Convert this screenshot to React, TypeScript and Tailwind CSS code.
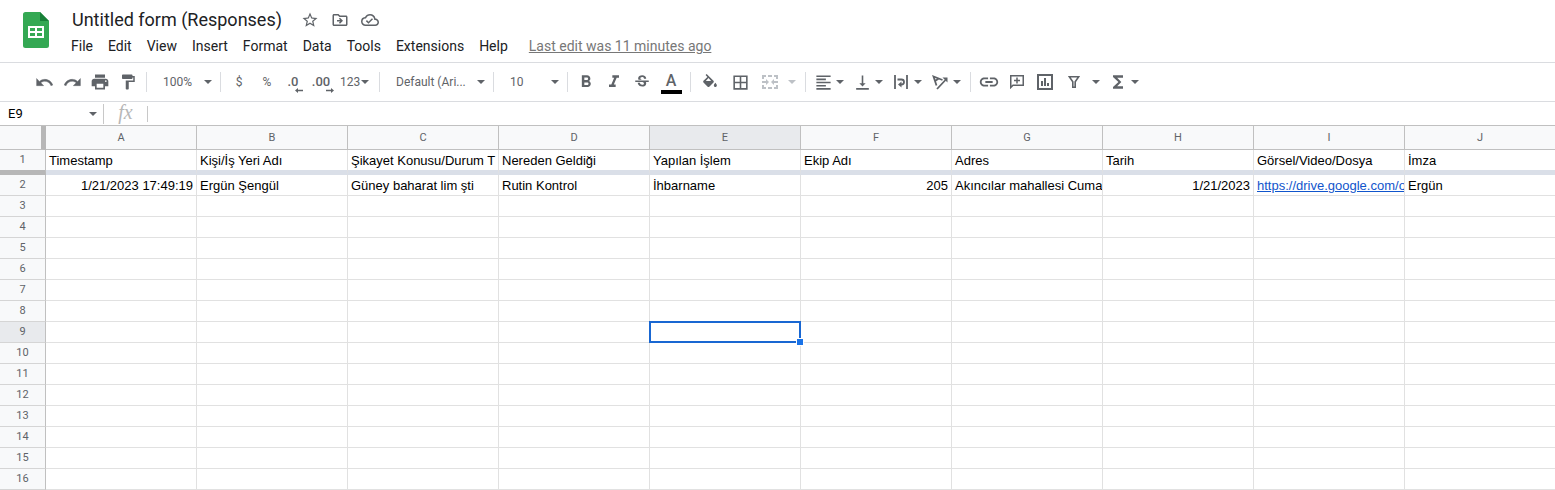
import type { ReactNode } from 'react';
import {
  MdBorderAll,
  MdFormatAlignLeft,
  MdFormatBold,
  MdFormatItalic,
  MdFormatPaint,
  MdFunctions,
  MdLink,
  MdOutlineCloudDone,
  MdOutlineDriveFileMove,
  MdPrint,
  MdStarBorder,
  MdStrikethroughS,
  MdVerticalAlignBottom,
} from 'react-icons/md';

const menus = ['File', 'Edit', 'View', 'Insert', 'Format', 'Data', 'Tools', 'Extensions', 'Help'];
const columns = ['A', 'B', 'C', 'D', 'E', 'F', 'G', 'H', 'I', 'J'];
const rowNumbers = Array.from({ length: 16 }, (_, i) => i + 1);

const cells: Record<string, string> = {
  A1: 'Timestamp',
  B1: 'Kişi/İş Yeri Adı',
  C1: 'Şikayet Konusu/Durum T',
  D1: 'Nereden Geldiği',
  E1: 'Yapılan İşlem',
  F1: 'Ekip Adı',
  G1: 'Adres',
  H1: 'Tarih',
  I1: 'Görsel/Video/Dosya',
  J1: 'İmza',
  A2: '1/21/2023 17:49:19',
  B2: 'Ergün Şengül',
  C2: 'Güney baharat lim şti',
  D2: 'Rutin Kontrol',
  E2: 'İhbarname',
  F2: '205',
  G2: 'Akıncılar mahallesi Cuma',
  H2: '1/21/2023',
  I2: 'https://drive.google.com/o',
  J2: 'Ergün',
};
const rightAligned = ['A2', 'F2', 'H2'];

const undoPath =
  'M12.500 8c-2.650 0-5.050.990-6.900 2.600L2 7v9h9l-3.620-3.620c1.390-1.160 3.160-1.880 5.120-1.880 3.540 0 6.550 2.310 7.600 5.500l2.370-.780C21.080 11.030 17.150 8 12.500 8z';

function UndoIcon({ flipped }: { flipped?: boolean }) {
  return (
    <svg
      viewBox="0 0 24 24"
      className="size-[19px] fill-current stroke-current"
      strokeWidth=".5"
      aria-hidden="true"
    >
      <path d={undoPath} transform={flipped ? 'translate(24 0) scale(-1 1)' : undefined} />
    </svg>
  );
}

function Caret() {
  return (
    <svg viewBox="0 0 8 4" className="h-1 w-2 shrink-0 fill-current" aria-hidden="true">
      <path d="M0 0h8L4 4z" />
    </svg>
  );
}

function Sep() {
  return <div className="mx-1 h-5 w-px shrink-0 bg-[#dadce0]" />;
}

function Tool({ label, wide, children }: { label: string; wide?: boolean; children: ReactNode }) {
  return (
    <button
      type="button"
      aria-label={label}
      className={`flex h-7 shrink-0 items-center justify-center ${wide ? 'w-[30px]' : 'w-7'}`}
    >
      {children}
    </button>
  );
}

function Combo({ label, children }: { label: string; children: ReactNode }) {
  return (
    <button type="button" aria-label={label} className="flex h-7 w-[39px] shrink-0 items-center">
      <span className="flex w-[26px] justify-center">{children}</span>
      <Caret />
    </button>
  );
}

function Picker({ label, value, className }: { label: string; value: string; className: string }) {
  return (
    <label className={`grid h-7 shrink-0 items-center ${className}`}>
      <select
        aria-label={label}
        className="col-start-1 row-start-1 w-full appearance-none bg-transparent pl-3 text-xs outline-none"
      >
        <option>{value}</option>
      </select>
      <span className="pointer-events-none col-start-1 row-start-1 mr-1 justify-self-end">
        <Caret />
      </span>
    </label>
  );
}

function DecimalIcon({ text, more }: { text: string; more?: boolean }) {
  return (
    <span className="flex flex-col items-end pt-1">
      <span className="pr-1 text-[13px] leading-[13px] font-medium">{text}</span>
      <svg viewBox="0 0 8 5" className="h-[5px] w-2 fill-current" aria-hidden="true">
        {more ? <path d="M0 1.700h5V0l3 2.500L5 5V3.300H0z" /> : <path d="M8 1.700H3V0L0 2.500 3 5V3.300h5z" />}
      </svg>
    </span>
  );
}

function SheetsLogo() {
  return (
    <svg viewBox="0 0 26 36" className="h-9 w-[26px]" aria-hidden="true">
      <path fill="#34a853" d="M2.500 0H17l9 9v24.500a2.500 2.500 0 0 1-2.500 2.500h-21A2.500 2.500 0 0 1 0 33.500v-31A2.500 2.500 0 0 1 2.500 0z" />
      <path fill="#188038" d="M17 0l9 9h-9z" />
      <path
        fill="#fff"
        fillRule="evenodd"
        d="M5 14h16v12H5zM7 16v3h5v-3zM14 16v3h5v-3zM7 21v3h5v-3zM14 21v3h5v-3z"
      />
    </svg>
  );
}

function Header() {
  return (
    <header className="flex h-[62px] pl-[23px]">
      <div className="pt-3">
        <SheetsLogo />
      </div>
      <div className="min-w-0 pt-2 pl-[22px]">
        <div className="flex h-6 items-center">
          <h1 className="pl-px text-lg leading-6 whitespace-nowrap text-[#202124]">Untitled form (Responses)</h1>
          <div className="flex gap-3 pl-[19px] text-[#5f6368]">
            <button type="button" aria-label="Star">
              <MdStarBorder size={18} />
            </button>
            <button type="button" aria-label="Move">
              <MdOutlineDriveFileMove size={18} />
            </button>
            <button type="button" aria-label="See document status">
              <MdOutlineCloudDone size={18} />
            </button>
          </div>
        </div>
        <nav className="flex h-7 items-center gap-[15px] text-sm whitespace-nowrap text-[#202124]">
          {menus.map((m) => (
            <button type="button" key={m}>
              {m}
            </button>
          ))}
          <a href="#history" className="pl-1.5 text-[#777] underline">
            Last edit was 11 minutes ago
          </a>
        </nav>
      </div>
    </header>
  );
}

function Toolbar() {
  return (
    <div
      role="toolbar"
      aria-label="Formatting"
      className="flex h-10 items-center overflow-hidden border-y border-[#dadce0] pl-[30px] text-xs text-[#5f6368]"
    >
      <Tool label="Undo">
        <UndoIcon />
      </Tool>
      <Tool label="Redo">
        <UndoIcon flipped />
      </Tool>
      <Tool label="Print">
        <MdPrint size={20} />
      </Tool>
      <Tool label="Paint format">
        <MdFormatPaint size={18} />
      </Tool>
      <Sep />
      <Picker label="Zoom" value="100%" className="w-[65px]" />
      <Sep />
      <Tool label="Format as currency">$</Tool>
      <Tool label="Format as percent">%</Tool>
      <Tool label="Decrease decimal places">
        <DecimalIcon text=".0" />
      </Tool>
      <Tool label="Increase decimal places">
        <DecimalIcon text=".00" more />
      </Tool>
      <button type="button" aria-label="More formats" className="flex h-7 w-[38px] shrink-0 items-center pl-[3px]">
        <span className="pr-px">123</span>
        <Caret />
      </button>
      <Sep />
      <Picker label="Font" value="Default (Ari..." className="w-[105px]" />
      <Sep />
      <Picker label="Font size" value="10" className="w-[65px]" />
      <Sep />
      <Tool label="Bold">
        <MdFormatBold size={20} />
      </Tool>
      <Tool label="Italic">
        <MdFormatItalic size={20} />
      </Tool>
      <Tool label="Strikethrough">
        <MdStrikethroughS size={18} />
      </Tool>
      <Tool label="Text color" wide>
        <span className="flex w-[21px] flex-col items-center border-b-4 border-black pt-0.5 text-base leading-[18px] font-medium">
          A
        </span>
      </Tool>
      <Sep />
      <Tool label="Fill color" wide>
        <svg viewBox="3 0 18 17" className="mb-1 h-[13px] w-3.5 fill-current" aria-hidden="true">
          <path d="M16.560 8.940L7.620 0 6.210 1.410l2.380 2.380-5.150 5.150c-.590.590-.590 1.540 0 2.120l5.500 5.500c.290.290.680.440 1.060.440s.770-.150 1.060-.440l5.500-5.500c.590-.580.590-1.530 0-2.120zM6.500 9L10 5.210 13.500 9zM19 11.500s-2 2.170-2 3.500c0 1.100.900 2 2 2s2-.900 2-2c0-1.330-2-3.500-2-3.500z" />
        </svg>
      </Tool>
      <Tool label="Borders" wide>
        <MdBorderAll size={19} />
      </Tool>
      <button
        type="button"
        aria-label="Merge cells"
        disabled
        className="flex h-7 w-[46px] shrink-0 items-center text-[#bdc1c6]"
      >
        <span className="flex w-[33px] justify-center pr-[3px]">
          <svg viewBox="0 0 16 14" className="h-3.5 w-4 fill-current" aria-hidden="true">
            <path d="M0 0h4v2H2v2H0zM6 0h4v2H6zM12 0h4v4h-2V2h-2zM0 10h2v2h2v2H0zM6 12h4v2H6zM14 10h2v4h-4v-2h2z" />
            <path d="M0 6h4V4l3 3-3 3V8H0zM16 6h-4V4L9 7l3 3V8h4z" />
          </svg>
        </span>
        <Caret />
      </button>
      <Sep />
      <Combo label="Horizontal align">
        <MdFormatAlignLeft size={19} />
      </Combo>
      <Combo label="Vertical align">
        <MdVerticalAlignBottom size={19} />
      </Combo>
      <Combo label="Text wrapping">
        <svg viewBox="0 0 14 14" className="size-3.5 fill-none stroke-current" strokeWidth="1.800" aria-hidden="true">
          <path d="M1 0v14M13 0v14M3.500 4.500h4a2.500 2.500 0 0 1 0 5H6.500" />
          <path d="M7.500 6.500v6l-3.500-3z" fill="currentColor" stroke="none" />
        </svg>
      </Combo>
      <Combo label="Text rotation">
        <svg viewBox="0 0 16 15" className="h-[15px] w-4 fill-none stroke-current" strokeWidth="1.800" aria-hidden="true">
          <path d="M4.500 10.500L1.500 1.500l9 3.500M3 6l3.800-2.500M5 14L13.500 5" />
          <path d="M15.500 2.500v5l-5-5z" fill="currentColor" stroke="none" />
        </svg>
      </Combo>
      <Sep />
      <Tool label="Insert link">
        <MdLink size={22} />
      </Tool>
      <Tool label="Insert comment">
        <svg viewBox="0 0 14 14" className="size-3.5 fill-none stroke-current" strokeWidth="1.500" aria-hidden="true">
          <path d="M.750 12.500V.750h12.500v9.500H3zM7 2.500v6M4 5.500h6" />
        </svg>
      </Tool>
      <Tool label="Insert chart">
        <svg viewBox="0 0 16 16" className="size-4 fill-none stroke-current" strokeWidth="2" aria-hidden="true">
          <path d="M1 1h14v14H1z" />
          <path d="M5 7v5M8 4v8M11 9v3" />
        </svg>
      </Tool>
      <button type="button" aria-label="Create a filter" className="flex h-7 w-[46px] shrink-0 items-center pl-px">
        <span className="flex w-8 pl-2">
          <svg viewBox="0 0 12 12" className="size-3 fill-none stroke-current" strokeWidth="1.600" aria-hidden="true">
            <path d="M1.300.8h9.400L7.200 5.800v5.400H4.800V5.800z" />
          </svg>
        </span>
        <Caret />
      </button>
      <Combo label="Functions">
        <MdFunctions size={20} />
      </Combo>
    </div>
  );
}

function FormulaBar() {
  return (
    <div className="flex h-[23px] items-center">
      <label className="grid h-full w-[103px] shrink-0 items-center">
        <input
          aria-label="Name box"
          defaultValue="E9"
          className="col-start-1 row-start-1 w-full pl-2 text-[13px] text-black outline-none"
        />
        <span className="pointer-events-none col-start-1 row-start-1 mr-1.5 justify-self-end text-[#5f6368]">
          <Caret />
        </span>
      </label>
      <div className="h-5 w-px bg-[#c8c8c8]" />
      <span className="w-[43px] pb-1 text-center font-['Liberation_Serif',serif] text-xl leading-5 text-[#b7b7b7] italic">
        fx
      </span>
      <div className="h-4 w-px bg-[#c8c8c8]" />
      <input aria-label="Formula" className="min-w-0 flex-1 px-2 text-[13px] outline-none" />
    </div>
  );
}

function Cell({ id, frozen }: { id: string; frozen: boolean }) {
  const text = cells[id];
  const link = text?.startsWith('https');
  return (
    <td
      className={`relative border-r p-0 ${
        frozen ? 'border-b-[5px] border-r-[#e1e1e1] border-b-[#dadfe8]' : 'border-b border-[#e1e1e1]'
      }`}
    >
      {text && (
        <div
          className={`overflow-hidden pt-0.5 pl-[3px] leading-[18px] whitespace-nowrap ${
            rightAligned.includes(id) ? 'pr-[3px] text-right' : ''
          }`}
        >
          {link ? (
            <a href="#file" className="text-[#1155cc] underline">
              {text}
            </a>
          ) : (
            text
          )}
        </div>
      )}
      {id === 'E9' && (
        <div className="absolute -inset-px z-10 border-2 border-[#1967d2]">
          <div className="absolute -right-[5px] -bottom-[5px] size-2 border border-white bg-[#1a73e8]" />
        </div>
      )}
    </td>
  );
}

function Grid() {
  return (
    <div className="overflow-hidden border-t border-[#c0c0c0]">
      <table className="w-[1556px] table-fixed border-separate border-spacing-0 font-['Liberation_Sans',Arial,sans-serif] text-[13px] text-black">
        <colgroup>
          <col className="w-[46px]" />
          {columns.map((c) => (
            <col key={c} className="w-[151px]" />
          ))}
        </colgroup>
        <thead className="font-['Roboto',sans-serif] text-[11px] text-[#5f6368]">
          <tr className="h-6">
            <td className="border-r-[5px] border-b border-r-[#b7b7b7] border-b-[#c0c0c0] bg-[#f8f9fa] p-0" />
            {columns.map((c) => (
              <th
                key={c}
                scope="col"
                className={`border-r border-b border-[#c0c0c0] p-0 pt-px font-normal ${
                  c === 'E' ? 'bg-[#e8eaed]' : 'bg-[#f8f9fa]'
                }`}
              >
                {c}
              </th>
            ))}
          </tr>
        </thead>
        <tbody>
          {rowNumbers.map((n) => (
            <tr key={n} className={n === 1 ? 'h-[25px]' : 'h-[21px]'}>
              <th
                scope="row"
                className={`border-r border-r-[#c0c0c0] p-0 font-['Roboto',sans-serif] text-[11px] leading-4 font-normal text-[#5f6368] ${
                  n === 1 ? 'border-b-[5px] border-b-[#b7b7b7]' : 'border-b border-b-[#d5d5d5]'
                } ${n === 9 ? 'bg-[#e8eaed]' : 'bg-[#f8f9fa]'}`}
              >
                {n}
              </th>
              {columns.map((c) => (
                <Cell key={c} id={`${c}${n}`} frozen={n === 1} />
              ))}
            </tr>
          ))}
        </tbody>
      </table>
    </div>
  );
}

export default function App() {
  return (
    <div className="overflow-hidden bg-white font-['Roboto',sans-serif]">
      <Header />
      <Toolbar />
      <FormulaBar />
      <Grid />
    </div>
  );
}
